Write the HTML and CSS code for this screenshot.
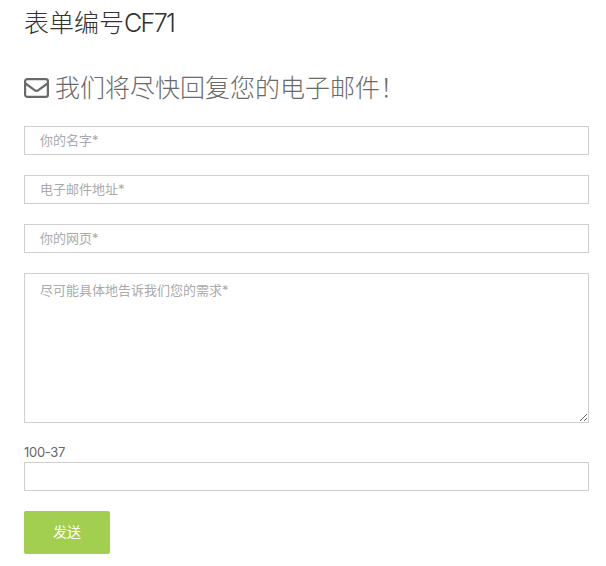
FILE: index.html
```html
<html>
  <head>
    <title>表单编号CF71</title>
    <link rel="stylesheet" href="styles.css">
  </head>

  <body>
    <h1 class='form-title'>表单编号<span class='form-code'>CF71</span></h1>

    <h2 class='form-lead'>
      <svg class='mail-icon' viewBox='0 0 25 20' width='25' height='20'>
        <rect x='1.1' y='1.1' width='22.8' height='17.8' rx='2.2' fill='none' stroke='currentColor' stroke-width='2.2'/>
        <path d='M1.5 5.5 L10.6 12.2 Q12.5 13.4 14.4 12.2 L23.5 5.5' fill='none' stroke='currentColor' stroke-width='2.2'/>
      </svg>
      <span>我们将尽快回复您的电子邮件！</span>
    </h2>

    <form class='contact-form'>
      <input class='field' type='text' placeholder='你的名字*'>
      <input class='field' type='text' placeholder='电子邮件地址*'>
      <input class='field' type='text' placeholder='你的网页*'>
      <textarea class='field message' placeholder='尽可能具体地告诉我们您的需求*'></textarea>
      <div class='captcha'>
        <label for='captcha'>100-37</label>
        <input class='field' id='captcha' type='text'>
      </div>
      <button class='send' type='button'>发送</button>
    </form>
  </body>
</html>
```

FILE: styles.css
```css
:root{
  --border: #cfcfcf;
  --green: #a2cf50;
}

body{
  margin: 0;
  padding: 0 17px 0 24px;
  background: #fff;
  font-family: "Inter", "Noto Sans CJK SC", sans-serif;
  color: #333;
}

.form-title{
  margin: 8px 0 0;
  font-size: 25px;
  line-height: 30px;
  font-weight: 300;
  color: #333;
}

.form-code{
  letter-spacing: -1.6px;
}

.form-lead{
  display: flex;
  align-items: center;
  gap: 6px;
  margin: 32px 0 0;
  font-size: 25px;
  line-height: 36px;
  font-weight: 300;
  color: #6a6a6a;
}

.mail-icon{
  flex: none;
}

.contact-form{
  display: flex;
  flex-direction: column;
  align-items: flex-start;
  gap: 20px;
  margin-top: 20px;
}

.field{
  display: block;
  box-sizing: border-box;
  width: 100%;
  height: 29px;
  margin: 0;
  padding: 0 15px 2px;
  border: 1px solid var(--border);
  border-radius: 0;
  outline: none;
  background: #fff;
  font-family: inherit;
  font-size: 13px;
  color: #333;
}

.field::placeholder{
  color: #aaa;
  opacity: 1;
}

.message{
  height: 150px;
  padding-top: 6px;
  line-height: 20px;
}

.captcha{
  width: 100%;
}

.captcha label{
  display: block;
  font-size: 13px;
  line-height: 19px;
  letter-spacing: -0.3px;
  color: #666;
}

.send{
  width: 86px;
  height: 43px;
  padding-bottom: 4px;
  border: 0;
  border-radius: 2px;
  background: var(--green);
  color: #fff;
  font-family: inherit;
  font-size: 14px;
}
```
